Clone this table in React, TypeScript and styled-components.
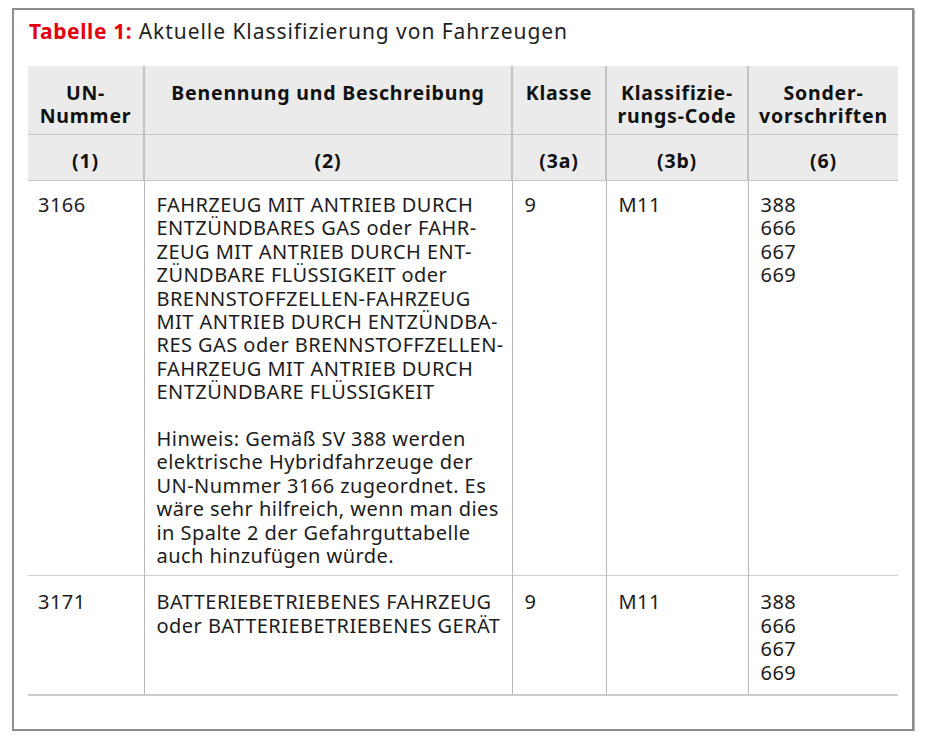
import styled, { createGlobalStyle } from "styled-components";

const GlobalStyle = createGlobalStyle`
  html, body {
    margin: 0;
    padding: 0;
    background: #ffffff;
  }
  body {
    font-family: "Noto Sans", "Open Sans", sans-serif;
    color: #1c1c1c;
  }
`;

const Frame = styled.div`
  box-sizing: border-box;
  width: 902px;
  height: 723px;
  margin: 8px 0 0 12px;
  padding: 7px 13px 0 14px;
  border: 2px solid #8e8e8e;
  box-shadow: 1px 1px 0 #b4b4b4;
`;

const Caption = styled.h1`
  margin: 0 0 21px 1px;
  font-size: 21px;
  line-height: 28px;
  letter-spacing: 0.95px;
  font-weight: 400;
  color: #1f1f1f;
  span {
    color: #e3000f;
    font-weight: 700;
    letter-spacing: 0.6px;
  }
`;

const Table = styled.table`
  width: 870px;
  border-collapse: collapse;
  table-layout: fixed;
  border-bottom: 2px solid #cdcdcd;
`;

const HeadCell = styled.th<{ $num?: boolean }>`
  padding: ${(p) => (p.$num ? "14px 4px 8px" : "15px 4px 7px")};
  background: #ebebeb;
  color: #111111;
  font-size: 19.5px;
  line-height: 23px;
  letter-spacing: 0.8px;
  font-weight: 700;
  text-align: center;
  vertical-align: top;
  border-left: 2px solid #c2c2c2;
  border-bottom: 1px solid #c6c6c6;
  &:first-child {
    border-left: none;
  }
`;

const Row = styled.tr`
  &:last-child > td {
    padding-top: 14px;
    padding-bottom: 10px;
  }
`;

const Cell = styled.td<{ $first?: boolean }>`
  padding: ${(p) => (p.$first ? "12px 10px 8px" : "12px 10px 8px 12px")};
  font-size: 20px;
  line-height: 23.4px;
  letter-spacing: 0.45px;
  vertical-align: top;
  border-left: 1px solid #b9b9b9;
  border-top: 1px solid #cfcfcf;
  &:first-child {
    border-left: none;
  }
`;

const Line = styled.span`
  display: block;
  white-space: nowrap;
`;

const Note = styled.div`
  margin-top: 23.4px;
`;

const columns = [116, 368, 94, 142, 150];

const rows = [
  {
    un: "3166",
    desc: [
      "FAHRZEUG MIT ANTRIEB DURCH",
      "ENTZÜNDBARES GAS oder FAHR-",
      "ZEUG MIT ANTRIEB DURCH ENT-",
      "ZÜNDBARE FLÜSSIGKEIT oder",
      "BRENNSTOFFZELLEN-FAHRZEUG",
      "MIT ANTRIEB DURCH ENTZÜNDBA-",
      "RES GAS oder BRENNSTOFFZELLEN-",
      "FAHRZEUG MIT ANTRIEB DURCH",
      "ENTZÜNDBARE FLÜSSIGKEIT",
    ],
    note: [
      "Hinweis: Gemäß SV 388 werden",
      "elektrische Hybridfahrzeuge der",
      "UN-Nummer 3166 zugeordnet. Es",
      "wäre sehr hilfreich, wenn man dies",
      "in Spalte 2 der Gefahrguttabelle",
      "auch hinzufügen würde.",
    ],
  },
  {
    un: "3171",
    desc: ["BATTERIEBETRIEBENES FAHRZEUG", "oder BATTERIEBETRIEBENES GERÄT"],
    note: [] as string[],
  },
];

const special = ["388", "666", "667", "669"];

export default function App() {
  return (
    <>
      <GlobalStyle />
      <Frame>
        <Caption>
          <span>Tabelle 1:</span> Aktuelle Klassifizierung von Fahrzeugen
        </Caption>
        <Table>
          <colgroup>
            {columns.map((w, i) => (
              <col key={i} style={{ width: w }} />
            ))}
          </colgroup>
          <thead>
            <tr>
              <HeadCell>
                <Line>UN-</Line>
                <Line>Nummer</Line>
              </HeadCell>
              <HeadCell>Benennung und Beschreibung</HeadCell>
              <HeadCell>Klasse</HeadCell>
              <HeadCell>
                <Line>Klassifizie-</Line>
                <Line>rungs-Code</Line>
              </HeadCell>
              <HeadCell>
                <Line>Sonder-</Line>
                <Line>vorschriften</Line>
              </HeadCell>
            </tr>
            <tr>
              <HeadCell $num>(1)</HeadCell>
              <HeadCell $num>(2)</HeadCell>
              <HeadCell $num>(3a)</HeadCell>
              <HeadCell $num>(3b)</HeadCell>
              <HeadCell $num>(6)</HeadCell>
            </tr>
          </thead>
          <tbody>
            {rows.map((row) => (
              <Row key={row.un}>
                <Cell $first>{row.un}</Cell>
                <Cell>
                  {row.desc.map((l) => (
                    <Line key={l}>{l}</Line>
                  ))}
                  {row.note.length > 0 && (
                    <Note>
                      {row.note.map((l) => (
                        <Line key={l}>{l}</Line>
                      ))}
                    </Note>
                  )}
                </Cell>
                <Cell>9</Cell>
                <Cell>M11</Cell>
                <Cell>
                  {special.map((s) => (
                    <Line key={s}>{s}</Line>
                  ))}
                </Cell>
              </Row>
            ))}
          </tbody>
        </Table>
      </Frame>
    </>
  );
}
